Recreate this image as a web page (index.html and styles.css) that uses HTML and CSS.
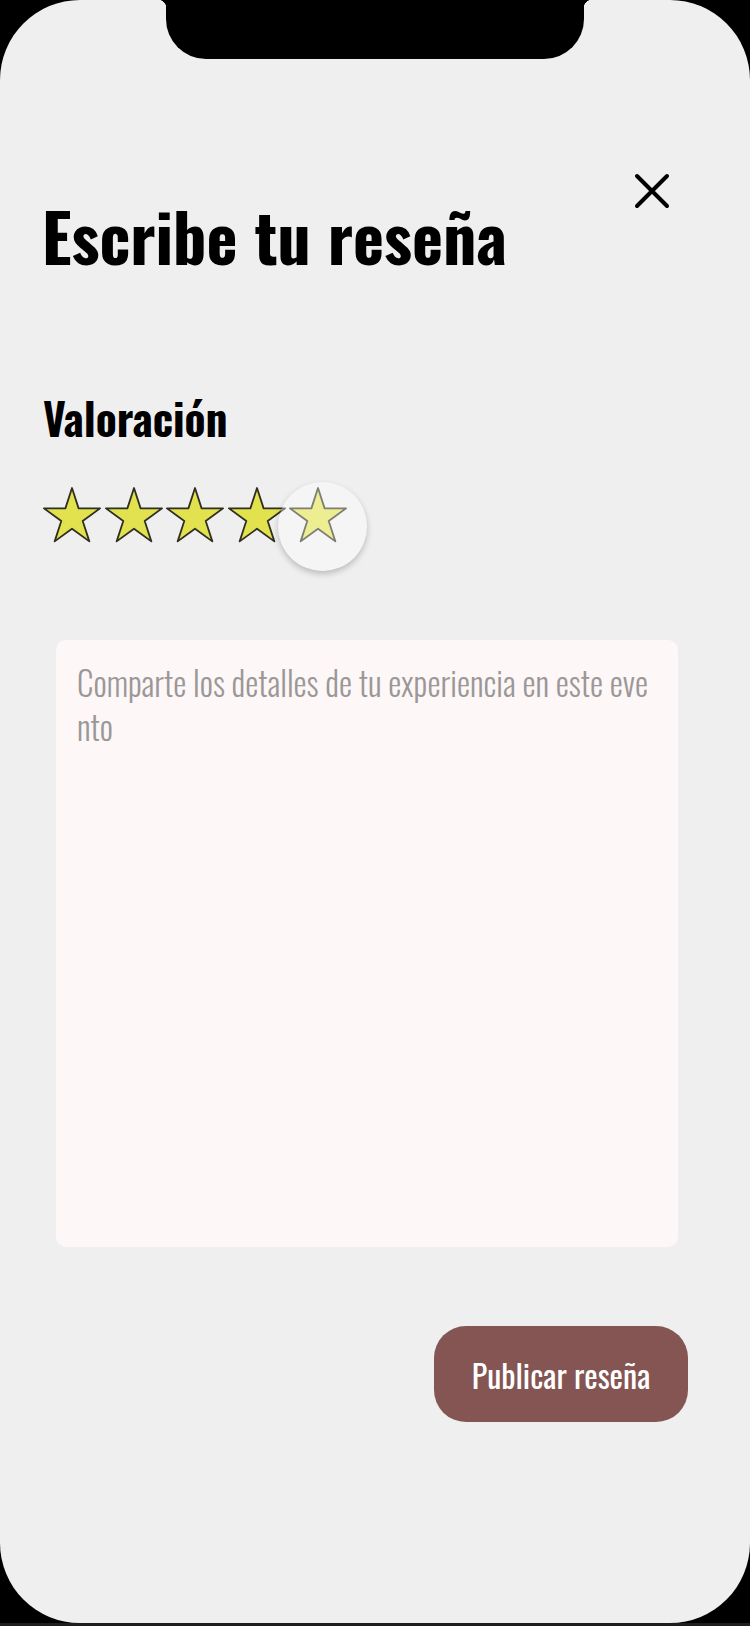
FILE: index.html
```html
<!DOCTYPE html>
<html lang="es">
<head>
<meta charset="utf-8">
<title>Escribe tu reseña</title>
<link rel="stylesheet" href="styles.css">
</head>
<body>
<div class="device">
  <div class="screen">
    <div class="notch"></div>
    <header class="header">
      <h1 class="title">Escribe tu reseña</h1>
      <button class="close" aria-label="Cerrar">
        <svg viewBox="0 0 36 36" width="36" height="36"><path d="M3 3 L33 33 M33 3 L3 33" stroke="#000" stroke-width="4" stroke-linecap="round" fill="none"/></svg>
      </button>
    </header>

    <section class="rating">
      <h2 class="label">Valoración</h2>
      <div class="stars">
        <svg class="star" viewBox="0 0 58 56"><polygon points="29,1 35.62,21.38 57.06,21.38 39.72,33.98 46.34,54.37 29,41.77 11.66,54.37 18.28,33.98 0.94,21.38 22.38,21.38"/></svg>
        <svg class="star" viewBox="0 0 58 56"><polygon points="29,1 35.62,21.38 57.06,21.38 39.72,33.98 46.34,54.37 29,41.77 11.66,54.37 18.28,33.98 0.94,21.38 22.38,21.38"/></svg>
        <svg class="star" viewBox="0 0 58 56"><polygon points="29,1 35.62,21.38 57.06,21.38 39.72,33.98 46.34,54.37 29,41.77 11.66,54.37 18.28,33.98 0.94,21.38 22.38,21.38"/></svg>
        <svg class="star" viewBox="0 0 58 56"><polygon points="29,1 35.62,21.38 57.06,21.38 39.72,33.98 46.34,54.37 29,41.77 11.66,54.37 18.28,33.98 0.94,21.38 22.38,21.38"/></svg>
        <span class="star-wrap">
          <svg class="star" viewBox="0 0 58 56"><polygon points="29,1 35.62,21.38 57.06,21.38 39.72,33.98 46.34,54.37 29,41.77 11.66,54.37 18.28,33.98 0.94,21.38 22.38,21.38"/></svg>
          <span class="ripple"></span>
        </span>
      </div>
    </section>

    <div class="field">
      <div class="placeholder">Comparte los detalles de tu experiencia en este evento</div>
    </div>

    <div class="actions">
      <button class="publish">Publicar reseña</button>
    </div>
  </div>
  <div class="bottom-edge"></div>
</div>
</body>
</html>
```
FILE: styles.css
```css
* { box-sizing: border-box; }

html, body {
  margin: 0;
  padding: 0;
  background: #000;
}

body {
  width: 750px;
  height: 1626px;
  overflow: hidden;
  font-family: "Oswald", "Roboto Condensed", "Liberation Sans Narrow", sans-serif;
}

.device {
  width: 750px;
  height: 1626px;
  display: flex;
  flex-direction: column;
}

.screen {
  position: relative;
  height: 1623px;
  background: #efefef;
  border-radius: 80px;
  display: flex;
  flex-direction: column;
}

.bottom-edge {
  height: 3px;
  background: #1e1e1e;
}

.notch {
  position: absolute;
  top: 0;
  left: 166px;
  width: 418px;
  height: 59px;
  background: #000;
  border-radius: 0 0 40px 40px;
}
.notch::before,
.notch::after {
  content: "";
  position: absolute;
  top: 0;
  width: 8px;
  height: 8px;
}
.notch::before {
  left: -8px;
  background: radial-gradient(circle at 0 100%, transparent 8px, #000 8.5px);
}
.notch::after {
  right: -8px;
  background: radial-gradient(circle at 100% 100%, transparent 8px, #000 8.5px);
}

.header {
  display: flex;
  justify-content: space-between;
  align-items: flex-start;
  margin-top: 173px;
  padding: 0 80px 0 42px;
}

.title {
  margin: 22px 0 0;
  font-size: 66px;
  font-weight: 700;
  line-height: 80px;
  color: #000;
}

.close {
  width: 36px;
  height: 36px;
  padding: 0;
  border: 0;
  background: none;
  display: flex;
}

.rating {
  padding-left: 43px;
  margin-top: 118px;
}

.label {
  margin: 0;
  font-size: 43.5px;
  font-weight: 700;
  line-height: 50px;
  color: #000;
}

.stars {
  display: flex;
  gap: 3.5px;
  margin-top: 44px;
  height: 56px;
}

.star {
  width: 58px;
  height: 56px;
  display: block;
  overflow: visible;
}
.star polygon {
  fill: #e2e24e;
  stroke: #2f2f22;
  stroke-width: 1.8;
  stroke-linejoin: round;
}

.star-wrap {
  position: relative;
  display: block;
}

.ripple {
  position: absolute;
  left: -11px;
  top: -5px;
  width: 89px;
  height: 89px;
  border-radius: 50%;
  background: rgba(255, 255, 255, 0.38);
  box-shadow: 0 3px 6px rgba(0, 0, 0, 0.22);
}

.field {
  margin: 97px 72px 0 56px;
  height: 607px;
  background: #fdf7f7;
  border-radius: 10px;
  padding: 21px 24px 21px 21px;
}

.placeholder {
  font-size: 33px;
  font-weight: 300;
  line-height: 44px;
  color: #9c9797;
  word-break: break-all;
}

.actions {
  display: flex;
  justify-content: flex-end;
  padding-right: 62px;
  margin-top: 79px;
}

.publish {
  width: 254px;
  height: 96px;
  border: 0;
  border-radius: 32px;
  background: #845553;
  color: #fff;
  font-family: inherit;
  font-size: 32px;
  font-weight: 400;
  padding: 0;
}
```
